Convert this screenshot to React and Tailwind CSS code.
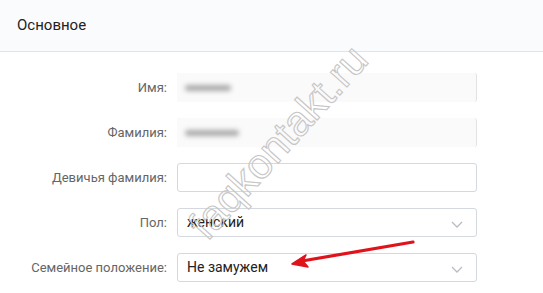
export default function App() {
  const font = { fontFamily: "Roboto, 'Noto Sans', Arial, sans-serif" };
  const Chevron = () => (
    <svg width="12" height="7" viewBox="0 0 12 7" fill="none" className="absolute right-[13px] top-[12px]">
      <path d="M1 1 L6 6 L11 1" stroke="#b9bcc1" strokeWidth="1.3" />
    </svg>
  );
  const Label = ({ children }) => (
    <div className="w-[167px] text-right text-[13px] text-[#656565] pr-0">{children}</div>
  );
  return (
    <div className="relative w-[543px] h-[293px] bg-white overflow-hidden" style={font}>
      <div className="h-[52px] bg-[#fafbfc] border-b border-[#e3e4e8] px-[17px] flex items-center">
        <span className="text-[15px] text-[#222] pb-[1px]">Основное</span>
      </div>
      <div className="flex flex-col gap-[16px] pt-[21px]">
        <div className="flex items-center h-[29px] gap-[10px]">
          <Label>Имя:</Label>
          <div className="relative w-[300px] h-[29px] bg-[#fafafa] border-r border-[#e2e2e2] rounded-r-[3px] flex items-center pl-[8px]">
            <div className="w-[46px] h-[6px] rounded-full bg-[#a9a9a9] blur-[2.5px]"></div>
          </div>
        </div>
        <div className="flex items-center h-[29px] gap-[10px]">
          <Label>Фамилия:</Label>
          <div className="relative w-[300px] h-[29px] bg-[#fafafa] border-r border-[#e2e2e2] rounded-r-[3px] flex items-center pl-[8px]">
            <div className="w-[54px] h-[6px] rounded-full bg-[#a9a9a9] blur-[2.5px]"></div>
          </div>
        </div>
        <div className="flex items-center h-[29px] gap-[10px]">
          <Label>Девичья фамилия:</Label>
          <div className="w-[300px] h-[29px] border border-[#d3d9de] rounded-[3px] bg-white"></div>
        </div>
        <div className="flex items-center h-[29px] gap-[10px]">
          <Label>Пол:</Label>
          <div className="relative w-[300px] h-[29px] border border-[#d3d9de] rounded-[3px] bg-white flex items-center pl-[9px] text-[14px] text-[#222]">
            женский
            <Chevron />
          </div>
        </div>
        <div className="flex items-center h-[29px] gap-[10px]">
          <Label>Семейное положение:</Label>
          <div className="relative w-[300px] h-[29px] border border-[#d3d9de] rounded-[3px] bg-white flex items-center pl-[9px] text-[14px] text-[#222]">
            Не замужем
            <Chevron />
          </div>
        </div>
      </div>
      <div
        className="absolute left-[278px] top-[142px] whitespace-nowrap text-[42px] text-transparent [-webkit-text-stroke:1.1px_#c6c6c6] -translate-x-1/2 -translate-y-1/2 -rotate-[48deg]"
        style={{ fontFamily: "'Liberation Sans', Arial, sans-serif" }}
      >
        faqkontakt.ru
      </div>
      <svg className="absolute left-0 top-0" width="543" height="293" viewBox="0 0 543 293">
        <path d="M413 242 L302 261" stroke="#e0131b" strokeWidth="3.2" strokeLinecap="round" />
        <path d="M292 264 L306 255 L303 261 L308 267 Z" fill="#e0131b" stroke="#e0131b" strokeWidth="1.5" strokeLinejoin="round" />
      </svg>
    </div>
  );
}
